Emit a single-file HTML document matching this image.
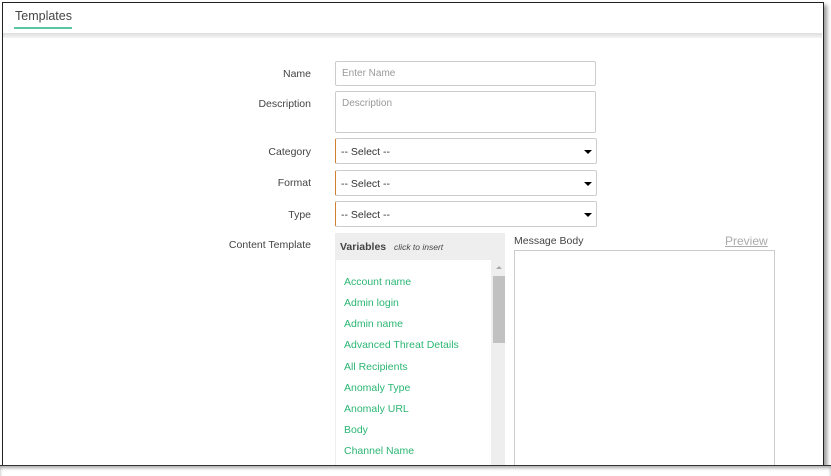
<!DOCTYPE html><html><head><style>
html,body{margin:0;width:831px;height:476px;overflow:hidden}
body{background:#fff;font-family:"Liberation Sans",sans-serif;position:relative}
.a{position:absolute}
.lbl{position:absolute;right:520px;font-size:10.5px;color:#444}
.in{position:absolute;left:335px;width:261px;border:1px solid #ccc;border-radius:2px;background:#fff;font-size:10px;color:#999;box-sizing:border-box;padding-left:6px}
.sel{position:absolute;left:335px;width:262px;height:26px;border:1px solid #ccc;border-left:1px solid #d08030;border-radius:2px;box-sizing:border-box;font-size:10.5px;color:#333;padding:7px 0 0 5px}
.sel:after{content:"";position:absolute;right:4px;top:11px;border:4px solid transparent;border-top:4px solid #000;border-bottom:0}
.v{position:absolute;left:344px;font-size:10.5px;color:#2bb673}
</style></head><body>
<div class="a" style="left:2px;top:2px;width:820px;height:463px;border:1px solid #222;border-bottom:none;box-shadow:3px 3px 4px #999"></div>
<div class="a" style="left:15px;top:9px;font-size:12.5px;color:#444">Templates</div>
<div class="a" style="left:14px;top:27px;width:58px;height:2px;background:#5cc6a0"></div>
<div class="a" style="left:3px;top:33px;width:819px;height:5px;background:linear-gradient(#ddd,#f4f4f4)"></div>
<div class="lbl" style="top:68px">Name</div>
<div class="in" style="top:61px;height:25px;line-height:23px">Enter Name</div>
<div class="lbl" style="top:98px">Description</div>
<div class="in" style="top:91px;height:42px;padding-top:6px">Description</div>
<div class="lbl" style="top:146px">Category</div>
<div class="sel" style="top:138px">-- Select --</div>
<div class="lbl" style="top:177px">Format</div>
<div class="sel" style="top:170px">-- Select --</div>
<div class="lbl" style="top:209px">Type</div>
<div class="sel" style="top:201px">-- Select --</div>
<div class="lbl" style="top:239px">Content Template</div>
<div class="a" style="left:335px;top:233px;width:170px;height:232px;background:#eee"></div>
<div class="a" style="left:340px;top:241px;font-size:10.5px;color:#444"><b>Variables</b> <i style="font-size:8.5px;margin-left:5px">click to insert</i></div>
<div class="a" style="left:336px;top:260px;width:155px;height:205px;background:#fff"></div>
<div class="a" style="left:493px;top:276px;width:12px;height:67px;background:#c1c1c1"></div>
<div class="a" style="left:496px;top:266px;border:3px solid transparent;border-bottom:3px solid #aaa;border-top:0"></div>
<div class="v" style="top:276px">Account name</div>
<div class="v" style="top:297px">Admin login</div>
<div class="v" style="top:318px">Admin name</div>
<div class="v" style="top:339px">Advanced Threat Details</div>
<div class="v" style="top:361px">All Recipients</div>
<div class="v" style="top:382px">Anomaly Type</div>
<div class="v" style="top:403px">Anomaly URL</div>
<div class="v" style="top:424px">Body</div>
<div class="v" style="top:445px">Channel Name</div>
<div class="a" style="left:514px;top:235px;font-size:10.5px;color:#444">Message Body</div>
<div class="a" style="left:725px;top:234px;font-size:12px;color:#aaa;text-decoration:underline">Preview</div>
<div class="a" style="left:514px;top:250px;width:259px;height:215px;border:1px solid #ccc;border-bottom:none"></div>
<div class="a" style="left:0;top:465px;width:831px;height:11px;background:#fff;border-top:1px solid #333;box-shadow:0 2px 3px #aaa inset"></div>
</body></html>
